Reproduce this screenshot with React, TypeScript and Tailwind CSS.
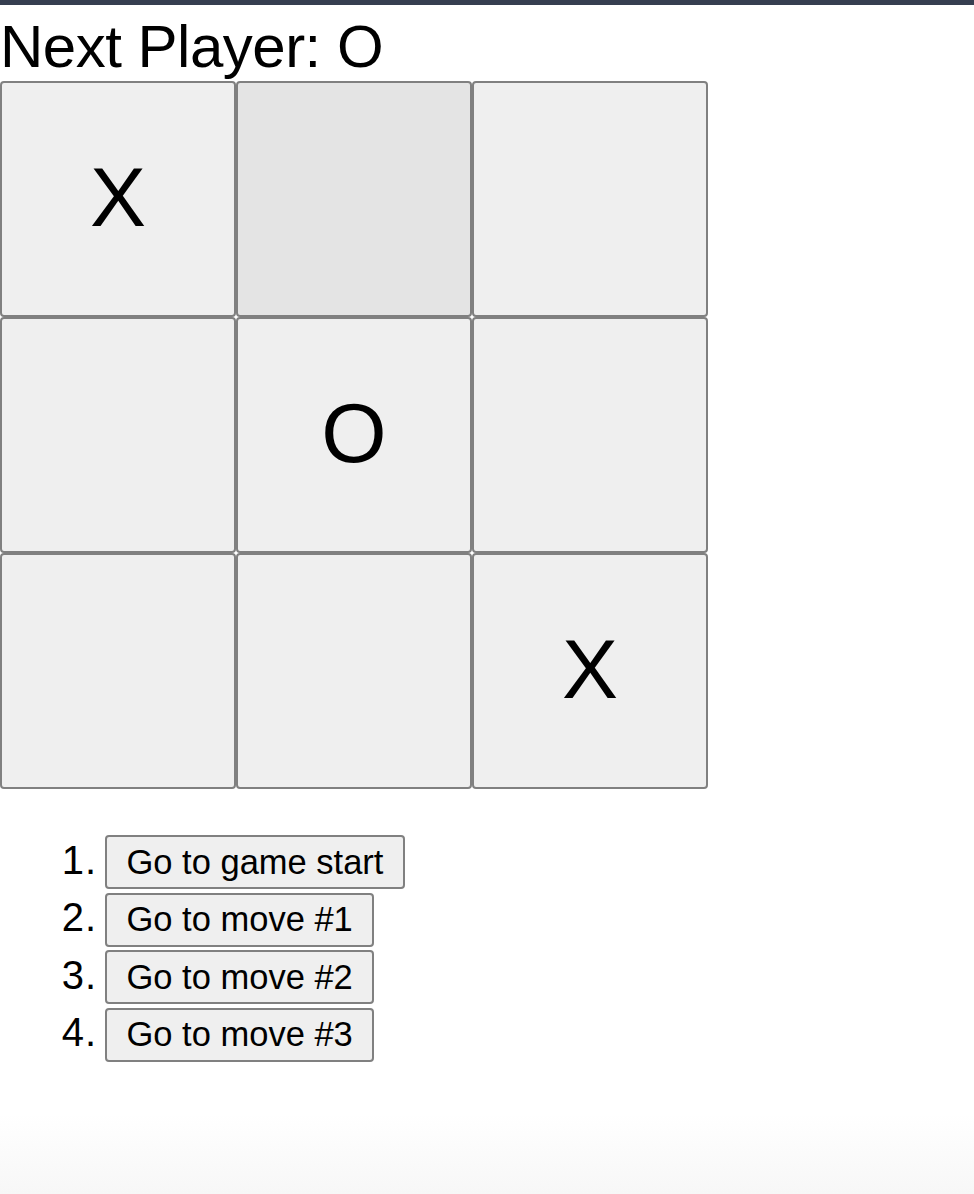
import React, { useState } from 'react'

type Cell = 'X' | 'O' | null

const board: Cell[] = ['X', null, null, null, 'O', null, null, null, 'X']
const moves = ['Go to game start', 'Go to move #1', 'Go to move #2', 'Go to move #3']

function Square({ value, hover }: { value: Cell; hover?: boolean }) {
  return (
    <button
      className={
        'h-[236px] w-[236px] rounded-[4px] border-2 border-[#808080] pb-[5px] text-[84px] leading-none text-black flex items-center justify-center ' +
        (hover ? 'bg-[#e4e4e4]' : 'bg-[#efefef]')
      }
    >
      {value}
    </button>
  )
}

export default function App() {
  const [current] = useState(3)

  return (
    <div
      className="min-h-[1194px] bg-[linear-gradient(to_bottom,#ffffff_calc(100%-80px),#f7f7f7)] text-black"
      style={{ fontFamily: '"Liberation Sans", Arial, sans-serif' }}
    >
      <div className="h-[5px] bg-[#363e50]" />

      <h1 className="h-[76px] pt-[8px] text-[60px] leading-[68px] tracking-[-0.5px] font-normal">
        Next Player: {current % 2 === 1 ? 'O' : 'X'}
      </h1>

      <div className="grid grid-cols-[repeat(3,236px)]">
        {board.map((v, i) => (
          <Square key={i} value={v} hover={i === 1} />
        ))}
      </div>

      <ol className="mt-[46px] flex flex-col gap-[3.5px]">
        {moves.map((m, i) => (
          <li key={m} className="flex items-center">
            <span className="w-[97px] pb-[5px] text-right text-[40px] leading-none tracking-[1px]">{i + 1}.</span>
            <button className="ml-[8px] h-[54px] rounded-[4px] border-2 border-[#808080] bg-[#efefef] px-[19.5px] text-[34.5px] leading-none whitespace-nowrap">
              {m}
            </button>
          </li>
        ))}
      </ol>
    </div>
  )
}
